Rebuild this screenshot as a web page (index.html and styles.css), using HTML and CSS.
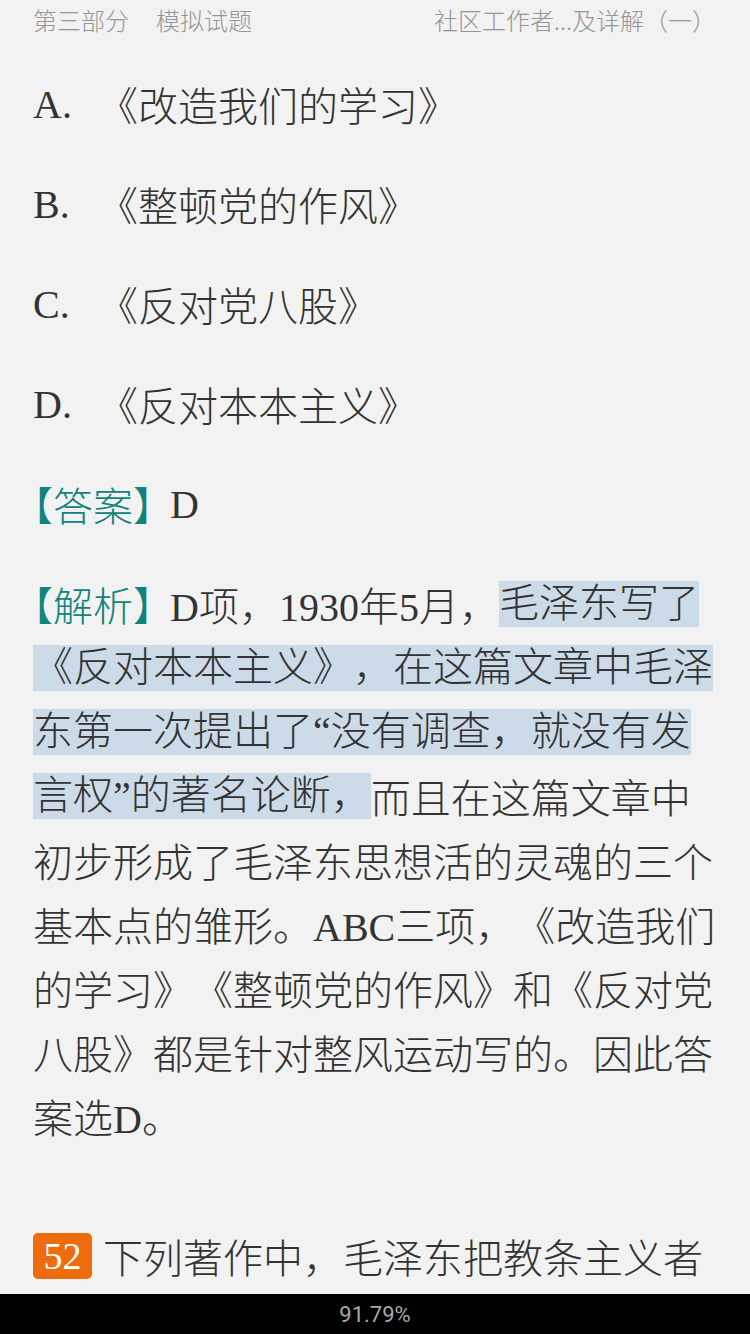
FILE: index.html
```html
<!DOCTYPE html>
<html lang="zh-CN">
<head>
<meta charset="utf-8">
<link rel="stylesheet" href="styles.css">
</head>
<body>
<div class="page">
  <main class="content">
    <header class="top">
      <span class="top-left">第三部分<span class="sp"></span>模拟试题</span>
      <span class="top-right">社区工作者...及详解（一）</span>
    </header>
    <div class="opt"><span class="lab">A.</span><span>《改造我们的学习》</span></div>
    <div class="opt"><span class="lab">B.</span><span>《整顿党的作风》</span></div>
    <div class="opt"><span class="lab">C.</span><span>《反对党八股》</span></div>
    <div class="opt"><span class="lab">D.</span><span>《反对本本主义》</span></div>
    <div class="opt"><span class="tag"><span class="br">【</span>答案<span class="br">】</span></span><span>D</span></div>
    <div class="para">
      <div class="ln"><span class="tag"><span class="br">【</span>解析<span class="br">】</span></span><span>D项，1930年5月，</span><span class="hl">毛泽东写了</span></div>
      <div class="ln"><span class="hl">《反对本本主义》，在这篇文章中毛泽</span></div>
      <div class="ln"><span class="hl">东第一次提出了“没有调查，就没有发</span></div>
      <div class="ln"><span class="hl">言权”的著名论断，</span><span>而且在这篇文章中</span></div>
      <div class="ln"><span>初步形成了毛泽东思想活的灵魂的三个</span></div>
      <div class="ln"><span>基本点的雏形。ABC三项，《改造我们</span></div>
      <div class="ln"><span>的学习》《整顿党的作风》和《反对党</span></div>
      <div class="ln"><span>八股》都是针对整风运动写的。因此答</span></div>
      <div class="ln"><span>案选D。</span></div>
    </div>
    <div class="q"><span class="num">52</span><span>下列著作中，毛泽东把教条主义者</span></div>
  </main>
  <footer class="bar">91.79%</footer>
</div>
</body>
</html>
```

FILE: styles.css
```css
html, body {
  margin: 0;
  padding: 0;
  background: #f2f2f2;
}
.page {
  width: 750px;
  height: 1334px;
  display: flex;
  flex-direction: column;
  overflow: hidden;
}
.content {
  flex: 1;
  overflow: hidden;
  padding-left: 33px;
  font-family: "Liberation Serif", "Noto Sans CJK SC", serif;
  font-size: 40px;
  color: #333333;
  font-weight: 300;
  text-spacing-trim: space-all;
  font-kerning: none;
}
.top {
  height: 38px;
  display: flex;
  justify-content: space-between;
  align-items: center;
  padding-right: 34px;
  font-family: "Noto Sans CJK SC", sans-serif;
  font-size: 24px;
  color: #959595;
  margin-bottom: 16px;
  white-space: nowrap;
}
.sp {
  display: inline-block;
  width: 27px;
}
.opt {
  height: 100px;
  display: flex;
  align-items: center;
  white-space: pre;
}
.lab {
  width: 65px;
}
.tag {
  color: #10837a;
  margin-right: 17px;
}
.br {
  font-feature-settings: "halt";
}
.para {
  margin-top: 18px;
}
.ln {
  height: 64px;
  display: flex;
  align-items: center;
  white-space: pre;
}
.hl {
  display: inline-block;
  height: 46px;
  line-height: 46px;
  background: #cddbe8;
}
.q {
  margin-top: 76px;
  height: 64px;
  display: flex;
  align-items: center;
  white-space: pre;
}
.num {
  display: inline-flex;
  align-items: center;
  justify-content: center;
  width: 59px;
  height: 46px;
  border-radius: 5px;
  background: #ec6c0e;
  color: #ffffff;
  font-size: 38px;
  margin-right: 11px;
}
.bar {
  height: 40px;
  flex: none;
  background: #000000;
  color: #a8a8a8;
  font-family: Roboto, "Liberation Sans", sans-serif;
  font-size: 22px;
  display: flex;
  align-items: center;
  justify-content: center;
}
```
